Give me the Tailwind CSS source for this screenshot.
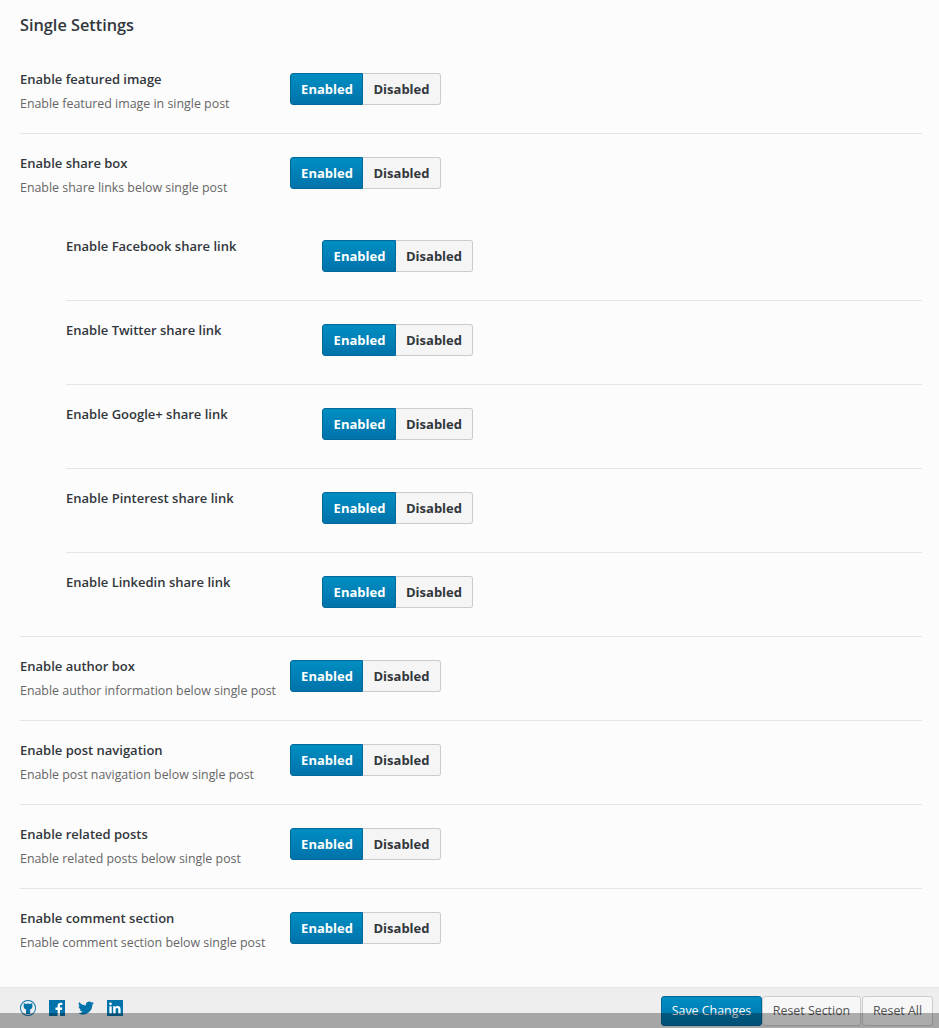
<!DOCTYPE html>
<html lang="en">
<head>
  <meta charset="UTF-8" />
  <meta name="viewport" content="width=device-width, initial-scale=1" />
  <title>Single Settings</title>
  <script src="https://cdn.jsdelivr.net/npm/@tailwindcss/browser@4"></script>
</head>
<body class="bg-[#fcfcfc] font-['Open_Sans',sans-serif] text-[#32373c] h-[1028px] overflow-hidden relative">
  <main class="h-[987px]">
    <h2 class="pl-5 pt-[13px] h-[50px] text-[16.3px] leading-[24px] font-semibold">Single Settings</h2>

    <section class="mx-5 mr-[17px] flex pt-[23px] pb-[28px] border-b border-[#e5e5e5]">
      <div class="w-[270px] h-8 text-[13px] leading-[18px]">
        <h4 class="font-semibold -mt-[3px]">Enable featured image</h4>
        <p class="text-[#666] text-[12.4px] leading-[18px] mt-[7px]">Enable featured image in single post</p>
      </div>
      <div class="flex h-8 text-[13px] font-bold">
        <span class="w-[73px] pt-px pl-px flex items-center justify-center rounded-l-[3px] border border-[#006799] bg-gradient-to-b from-[#008ec2] to-[#0073aa] text-white">Enabled</span>
        <span class="w-[78px] pt-px flex items-center justify-center rounded-r-[3px] border border-l-0 border-[#ccc] bg-[#f5f5f5]">Disabled</span>
      </div>
    </section>

    <section class="mx-5 mr-[17px] flex pt-[23px] pb-[28px]">
      <div class="w-[270px] h-8 text-[13px] leading-[18px]">
        <h4 class="font-semibold -mt-[3px]">Enable share box</h4>
        <p class="text-[#666] text-[12.4px] leading-[18px] mt-[7px]">Enable share links below single post</p>
      </div>
      <div class="flex h-8 text-[13px] font-bold">
        <span class="w-[73px] pt-px pl-px flex items-center justify-center rounded-l-[3px] border border-[#006799] bg-gradient-to-b from-[#008ec2] to-[#0073aa] text-white">Enabled</span>
        <span class="w-[78px] pt-px flex items-center justify-center rounded-r-[3px] border border-l-0 border-[#ccc] bg-[#f5f5f5]">Disabled</span>
      </div>
    </section>

    <div class="ml-[66px] mr-[17px]">
      <section class="flex pt-[23px] pb-[28px] border-b border-[#e5e5e5]">
        <h4 class="w-[256px] text-[13px] leading-[18px] font-semibold -mt-[3px]">Enable Facebook share link</h4>
        <div class="flex h-8 text-[13px] font-bold">
          <span class="w-[74px] pt-px pl-px flex items-center justify-center rounded-l-[3px] border border-[#006799] bg-gradient-to-b from-[#008ec2] to-[#0073aa] text-white">Enabled</span>
          <span class="w-[77px] pt-px flex items-center justify-center rounded-r-[3px] border border-l-0 border-[#ccc] bg-[#f5f5f5]">Disabled</span>
        </div>
      </section>
      <section class="flex pt-[23px] pb-[28px] border-b border-[#e5e5e5]">
        <h4 class="w-[256px] text-[13px] leading-[18px] font-semibold -mt-[3px]">Enable Twitter share link</h4>
        <div class="flex h-8 text-[13px] font-bold">
          <span class="w-[74px] pt-px pl-px flex items-center justify-center rounded-l-[3px] border border-[#006799] bg-gradient-to-b from-[#008ec2] to-[#0073aa] text-white">Enabled</span>
          <span class="w-[77px] pt-px flex items-center justify-center rounded-r-[3px] border border-l-0 border-[#ccc] bg-[#f5f5f5]">Disabled</span>
        </div>
      </section>
      <section class="flex pt-[23px] pb-[28px] border-b border-[#e5e5e5]">
        <h4 class="w-[256px] text-[13px] leading-[18px] font-semibold -mt-[3px]">Enable Google+ share link</h4>
        <div class="flex h-8 text-[13px] font-bold">
          <span class="w-[74px] pt-px pl-px flex items-center justify-center rounded-l-[3px] border border-[#006799] bg-gradient-to-b from-[#008ec2] to-[#0073aa] text-white">Enabled</span>
          <span class="w-[77px] pt-px flex items-center justify-center rounded-r-[3px] border border-l-0 border-[#ccc] bg-[#f5f5f5]">Disabled</span>
        </div>
      </section>
      <section class="flex pt-[23px] pb-[28px] border-b border-[#e5e5e5]">
        <h4 class="w-[256px] text-[13px] leading-[18px] font-semibold -mt-[3px]">Enable Pinterest share link</h4>
        <div class="flex h-8 text-[13px] font-bold">
          <span class="w-[74px] pt-px pl-px flex items-center justify-center rounded-l-[3px] border border-[#006799] bg-gradient-to-b from-[#008ec2] to-[#0073aa] text-white">Enabled</span>
          <span class="w-[77px] pt-px flex items-center justify-center rounded-r-[3px] border border-l-0 border-[#ccc] bg-[#f5f5f5]">Disabled</span>
        </div>
      </section>
      <section class="flex pt-[23px] pb-[28px]">
        <h4 class="w-[256px] text-[13px] leading-[18px] font-semibold -mt-[3px]">Enable Linkedin share link</h4>
        <div class="flex h-8 text-[13px] font-bold">
          <span class="w-[74px] pt-px pl-px flex items-center justify-center rounded-l-[3px] border border-[#006799] bg-gradient-to-b from-[#008ec2] to-[#0073aa] text-white">Enabled</span>
          <span class="w-[77px] pt-px flex items-center justify-center rounded-r-[3px] border border-l-0 border-[#ccc] bg-[#f5f5f5]">Disabled</span>
        </div>
      </section>
    </div>

    <div class="mx-5 mr-[17px] border-t border-[#e5e5e5]"></div>

    <section class="mx-5 mr-[17px] flex pt-[23px] pb-[28px] border-b border-[#e5e5e5]">
      <div class="w-[270px] h-8 text-[13px] leading-[18px]">
        <h4 class="font-semibold -mt-[3px]">Enable author box</h4>
        <p class="text-[#666] text-[12.4px] leading-[18px] mt-[7px] whitespace-nowrap">Enable author information below single post</p>
      </div>
      <div class="flex h-8 text-[13px] font-bold">
        <span class="w-[73px] pt-px pl-px flex items-center justify-center rounded-l-[3px] border border-[#006799] bg-gradient-to-b from-[#008ec2] to-[#0073aa] text-white">Enabled</span>
        <span class="w-[78px] pt-px flex items-center justify-center rounded-r-[3px] border border-l-0 border-[#ccc] bg-[#f5f5f5]">Disabled</span>
      </div>
    </section>
    <section class="mx-5 mr-[17px] flex pt-[23px] pb-[28px] border-b border-[#e5e5e5]">
      <div class="w-[270px] h-8 text-[13px] leading-[18px]">
        <h4 class="font-semibold -mt-[3px]">Enable post navigation</h4>
        <p class="text-[#666] text-[12.4px] leading-[18px] mt-[7px]">Enable post navigation below single post</p>
      </div>
      <div class="flex h-8 text-[13px] font-bold">
        <span class="w-[73px] pt-px pl-px flex items-center justify-center rounded-l-[3px] border border-[#006799] bg-gradient-to-b from-[#008ec2] to-[#0073aa] text-white">Enabled</span>
        <span class="w-[78px] pt-px flex items-center justify-center rounded-r-[3px] border border-l-0 border-[#ccc] bg-[#f5f5f5]">Disabled</span>
      </div>
    </section>
    <section class="mx-5 mr-[17px] flex pt-[23px] pb-[28px] border-b border-[#e5e5e5]">
      <div class="w-[270px] h-8 text-[13px] leading-[18px]">
        <h4 class="font-semibold -mt-[3px]">Enable related posts</h4>
        <p class="text-[#666] text-[12.4px] leading-[18px] mt-[7px]">Enable related posts below single post</p>
      </div>
      <div class="flex h-8 text-[13px] font-bold">
        <span class="w-[73px] pt-px pl-px flex items-center justify-center rounded-l-[3px] border border-[#006799] bg-gradient-to-b from-[#008ec2] to-[#0073aa] text-white">Enabled</span>
        <span class="w-[78px] pt-px flex items-center justify-center rounded-r-[3px] border border-l-0 border-[#ccc] bg-[#f5f5f5]">Disabled</span>
      </div>
    </section>
    <section class="mx-5 mr-[17px] flex pt-[23px] pb-[28px]">
      <div class="w-[270px] h-8 text-[13px] leading-[18px]">
        <h4 class="font-semibold -mt-[3px]">Enable comment section</h4>
        <p class="text-[#666] text-[12.4px] leading-[18px] mt-[7px]">Enable comment section below single post</p>
      </div>
      <div class="flex h-8 text-[13px] font-bold">
        <span class="w-[73px] pt-px pl-px flex items-center justify-center rounded-l-[3px] border border-[#006799] bg-gradient-to-b from-[#008ec2] to-[#0073aa] text-white">Enabled</span>
        <span class="w-[78px] pt-px flex items-center justify-center rounded-r-[3px] border border-l-0 border-[#ccc] bg-[#f5f5f5]">Disabled</span>
      </div>
    </section>
  </main>

  <footer class="h-[41px] bg-[#eee] border-t border-[#e5e5e5] flex justify-between pl-5 pr-[6px] pt-2">
    <div class="flex items-start gap-[13px] pt-[4px]">
      <svg width="16" height="16" viewBox="0 0 16 16" fill="#0073aa"><path fill-rule="evenodd" d="M8 0a8 8 0 1 0 0 16A8 8 0 0 0 8 0Zm0 .9a7.100 7.100 0 1 1 0 14.200A7.100 7.100 0 0 1 8 .9Z"/><path d="M3.800 3 5.800 3.900a6 6 0 0 1 4.400 0l2-.9.2 2.600c.4 1.800-.5 3.700-2.600 4.100.3.4.4.8.4 1.300v3.100H6v-3.100c0-.5.1-.9.4-1.300C4.200 9.300 3.300 7.400 3.700 5.600Z"/></svg>
      <svg width="16" height="16" viewBox="0 0 16 16"><rect width="16" height="16" fill="#0073aa"/><path fill="#fff" d="M11 16V10h2l.3-2.400H11V6.100c0-.7.200-1.100 1.200-1.100h1.200V2.900c-.2 0-.9-.1-1.800-.1-1.800 0-3 1.100-3 3.100v1.700H6.500V10h2.100v6Z"/></svg>
      <svg width="16" height="16" viewBox="0 0 16 16" fill="#0073aa"><path d="M16 3c-.6.300-1.200.4-1.900.5.700-.4 1.200-1 1.400-1.800-.6.400-1.300.7-2.100.8a3.300 3.300 0 0 0-5.600 3C5.100 5.400 2.700 4.100 1.100 2.100c-.9 1.500-.4 3.400 1 4.400-.5 0-1-.2-1.500-.4 0 1.600 1.100 3 2.600 3.300-.5.100-1 .1-1.500 0 .4 1.300 1.600 2.200 3.100 2.300A6.600 6.600 0 0 1 0 13c1.500.9 3.200 1.500 5 1.500 6.100 0 9.500-5.100 9.300-9.700.7-.5 1.200-1.100 1.700-1.800Z"/></svg>
      <svg width="16" height="16" viewBox="0 0 16 16"><rect width="16" height="16" fill="#0073aa"/><path fill="#fff" d="M2.400 6.200h2.300v7.400H2.400Zm1.100-3.700a1.300 1.300 0 1 1 0 2.700 1.300 1.300 0 0 1 0-2.700ZM6.200 6.200h2.200v1c.4-.6 1.100-1.200 2.300-1.200 2.400 0 2.900 1.500 2.900 3.500v4.100h-2.300V10c0-.9 0-2-1.200-2s-1.500 1-1.500 1.900v3.700H6.200Z"/></svg>
    </div>
    <div class="flex h-[30px] text-[12.4px]">
      <button class="w-[101px] rounded-[3px] border border-[#006799] bg-gradient-to-b from-[#008ec2] to-[#0073aa] text-white">Save Changes</button>
      <button class="w-[99px] rounded-[3px] border border-[#ccc] bg-[#f7f7f7] text-[#555]">Reset Section</button>
      <button class="ml-px w-[71px] rounded-[3px] border border-[#ccc] bg-[#f7f7f7] text-[#555]">Reset All</button>
    </div>
  </footer>

  <!-- dim strip along the bottom of the window -->
  <div class="absolute left-0 right-0 top-[1013px] bottom-0 bg-black/30"></div>
</body>
</html>
